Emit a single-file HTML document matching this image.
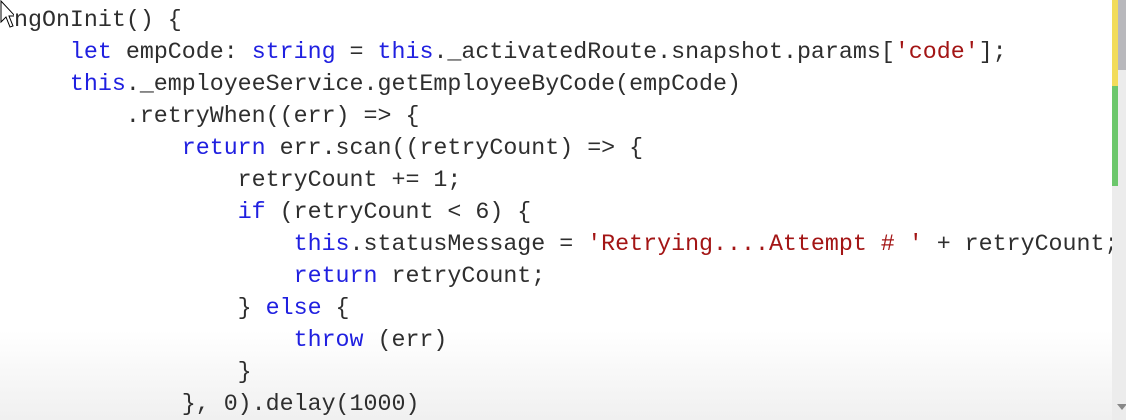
<!DOCTYPE html>
<html><head><style>
body{margin:0;width:1126px;height:420px;overflow:hidden;background:#fff;position:relative}
pre{margin:0;position:absolute;left:14px;top:4px;font-family:"Liberation Mono",monospace;font-size:23.3px;line-height:32px;color:#2e2e2e;letter-spacing:0}
.k{color:#2020e0}.s{color:#a31515}
.sb{position:absolute;left:1112px;top:0;width:14px;height:420px;background:#ececec}
.fade{position:absolute;left:0;top:330px;width:1112px;height:90px;background:linear-gradient(#fff0,#f0f0f0)}
</style></head><body>
<div class="fade"></div>
<pre>ngOnInit() {
    <span class="k">let</span> empCode: <span class="k">string</span> = <span class="k">this</span>._activatedRoute.snapshot.params[<span class="s">'code'</span>];
    <span class="k">this</span>._employeeService.getEmployeeByCode(empCode)
        .retryWhen((err) =&gt; {
            <span class="k">return</span> err.scan((retryCount) =&gt; {
                retryCount += 1;
                <span class="k">if</span> (retryCount &lt; 6) {
                    <span class="k">this</span>.statusMessage = <span class="s">'Retrying....Attempt # '</span> + retryCount;
                    <span class="k">return</span> retryCount;
                } <span class="k">else</span> {
                    <span class="k">throw</span> (err)
                }
            }, 0).delay(1000)</pre>
<div class="sb"></div>
<div style="position:absolute;left:1118px;top:0;width:8px;height:70px;background:#b8b8bc"></div>
<div style="position:absolute;left:1112px;top:0;width:6px;height:86px;background:#f2dc5a"></div>
<div style="position:absolute;left:1112px;top:86px;width:6px;height:100px;background:#6cc76c"></div>
<div style="position:absolute;left:1117px;top:404px;width:0;height:0;border-left:5px solid transparent;border-right:5px solid transparent;border-top:6px solid #888"></div>
<svg style="position:absolute;left:0;top:0" width="14" height="30"><path d="M1 1 L1 22 L6 17 L10 27 L13 26 L9 16 L15 16 Z" fill="#fff" stroke="#000" stroke-width="1"/></svg>
</body></html>
